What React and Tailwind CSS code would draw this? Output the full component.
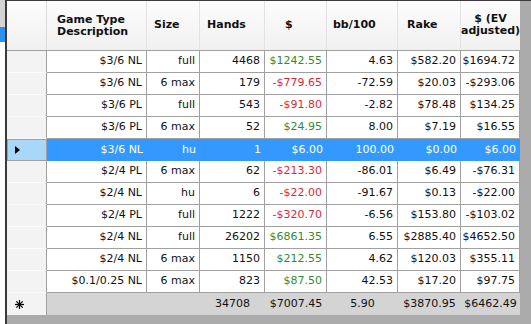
import React from "react";

const widths = ["w-[100px]", "w-[53px]", "w-[65px]", "w-[62px]", "w-[71px]", "w-[63px]", "w-[59px]"];

const rows = [
  ["$3/6 NL", "full", "4468", "$1242.55", "4.63", "$582.20", "$1694.72"],
  ["$3/6 NL", "6 max", "179", "-$779.65", "-72.59", "$20.03", "-$293.06"],
  ["$3/6 PL", "full", "543", "-$91.80", "-2.82", "$78.48", "$134.25"],
  ["$3/6 PL", "6 max", "52", "$24.95", "8.00", "$7.19", "$16.55"],
  ["$3/6 NL", "hu", "1", "$6.00", "100.00", "$0.00", "$6.00"],
  ["$2/4 PL", "6 max", "62", "-$213.30", "-86.01", "$6.49", "-$76.31"],
  ["$2/4 NL", "hu", "6", "-$22.00", "-91.67", "$0.13", "-$22.00"],
  ["$2/4 PL", "full", "1222", "-$320.70", "-6.56", "$153.80", "-$103.02"],
  ["$2/4 NL", "full", "26202", "$6861.35", "6.55", "$2885.40", "$4652.50"],
  ["$2/4 NL", "6 max", "1150", "$212.55", "4.62", "$120.03", "$355.11"],
  ["$0.1/0.25 NL", "6 max", "823", "$87.50", "42.53", "$17.20", "$97.75"],
];

const totals = ["", "", "34708", "$7007.45", "5.90", "$3870.95", "$6462.49"];
const SELECTED = 4;

function Arrow() {
  return (
    <svg width="5" height="8" viewBox="0 0 5 8">
      <path d="M0 0 L5 4 L0 8 Z" fill="#000" />
    </svg>
  );
}

function Star() {
  return (
    <svg width="9" height="9" viewBox="0 0 9 9" stroke="#000" strokeWidth="1.2">
      <line x1="4.5" y1="0" x2="4.5" y2="9" />
      <line x1="0" y1="4.5" x2="9" y2="4.5" />
      <line x1="1.3" y1="1.3" x2="7.7" y2="7.7" />
      <line x1="7.7" y1="1.3" x2="1.3" y2="7.7" />
    </svg>
  );
}

export default function App() {
  return (
    <div className="flex w-[531px] h-[324px] overflow-hidden bg-white font-['DejaVu_Sans',sans-serif] text-[11px] text-[#111]">
      {/* bord gauche de la fenêtre voisine */}
      <div className="flex flex-col w-[5px]">
        <div className="h-[27px] bg-[#d4d4d4]" />
        <div className="h-[15px] bg-[#2f8ff0]" />
        <div className="flex-1 bg-white" />
      </div>
      <div className="w-[2px] bg-[#3a3a3a]" />

      <div className="flex flex-col flex-1">
        <div className="h-[1px] bg-[#3a3a3a]" />
        <div className="flex">
          <div className="flex flex-col w-[513px]">
            {/* en-têtes */}
            <div className="flex h-[50px] bg-gradient-to-b from-[#fdfdfd] to-[#f0f0f0] border-b border-[#a0a0a0] font-bold">
              <div className="w-[40px] border-r border-[#dcdcdc]" />
              <div className="w-[100px] border-r border-[#e2e2e2] flex items-center pl-[10px] leading-[12px]">
                Game Type<br />Description
              </div>
              <div className="w-[53px] border-r border-[#e2e2e2] flex items-center pl-[7px]">Size</div>
              <div className="w-[65px] border-r border-[#e2e2e2] flex items-center pl-[7px]">Hands</div>
              <div className="w-[62px] border-r border-[#e2e2e2] flex items-center pl-[20px]">$</div>
              <div className="w-[71px] border-r border-[#e2e2e2] flex items-center pl-[6px]">bb/100</div>
              <div className="w-[63px] border-r border-[#e2e2e2] flex items-center pl-[9px]">Rake</div>
              <div className="w-[59px] flex items-center justify-center text-center leading-[12px] pb-[2px]">
                $ (EV<br />adjusted)
              </div>
            </div>

            {/* lignes */}
            {rows.map((r, i) => {
              const sel = i === SELECTED;
              return (
                <div key={i} className={`flex h-[22px] ${sel ? "bg-[#3399ff] text-white" : ""}`}>
                  <div
                    className={`w-[40px] flex items-center pl-[7px] border-r border-[#a0a0a0] ${
                      sel ? "bg-[#a9d7f7] border border-[#6c8ea8]" : "bg-[#f3f3f3] border-b border-b-[#fbfbfb]"
                    }`}
                  >
                    {sel && <Arrow />}
                  </div>
                  {r.map((v, j) => {
                    let color = "";
                    if (j === 3 && !sel) color = v.startsWith("-") ? "text-[#e0283a]" : "text-[#338a33]";
                    return (
                      <div
                        key={j}
                        className={`${widths[j]} flex items-center justify-end pr-[4px] whitespace-nowrap ${
                          sel ? "" : "border-r border-b border-[#a0a0a0]"
                        } ${color}`}
                      >
                        {v}
                      </div>
                    );
                  })}
                </div>
              );
            })}

            {/* totaux */}
            <div className="flex h-[22px]">
              <div className="w-[40px] flex items-center pl-[8px] bg-[#f3f3f3] border-r border-[#a0a0a0]">
                <Star />
              </div>
              {totals.map((v, j) => (
                <div key={j} className={`${widths[j]} flex items-center justify-center bg-[#d4d4d4] whitespace-nowrap`}>
                  {v}
                </div>
              ))}
            </div>
          </div>
          <div className="flex-1 bg-[#ababab]" />
        </div>
        <div className="flex-1 bg-[#ababab]" />
      </div>
    </div>
  );
}
